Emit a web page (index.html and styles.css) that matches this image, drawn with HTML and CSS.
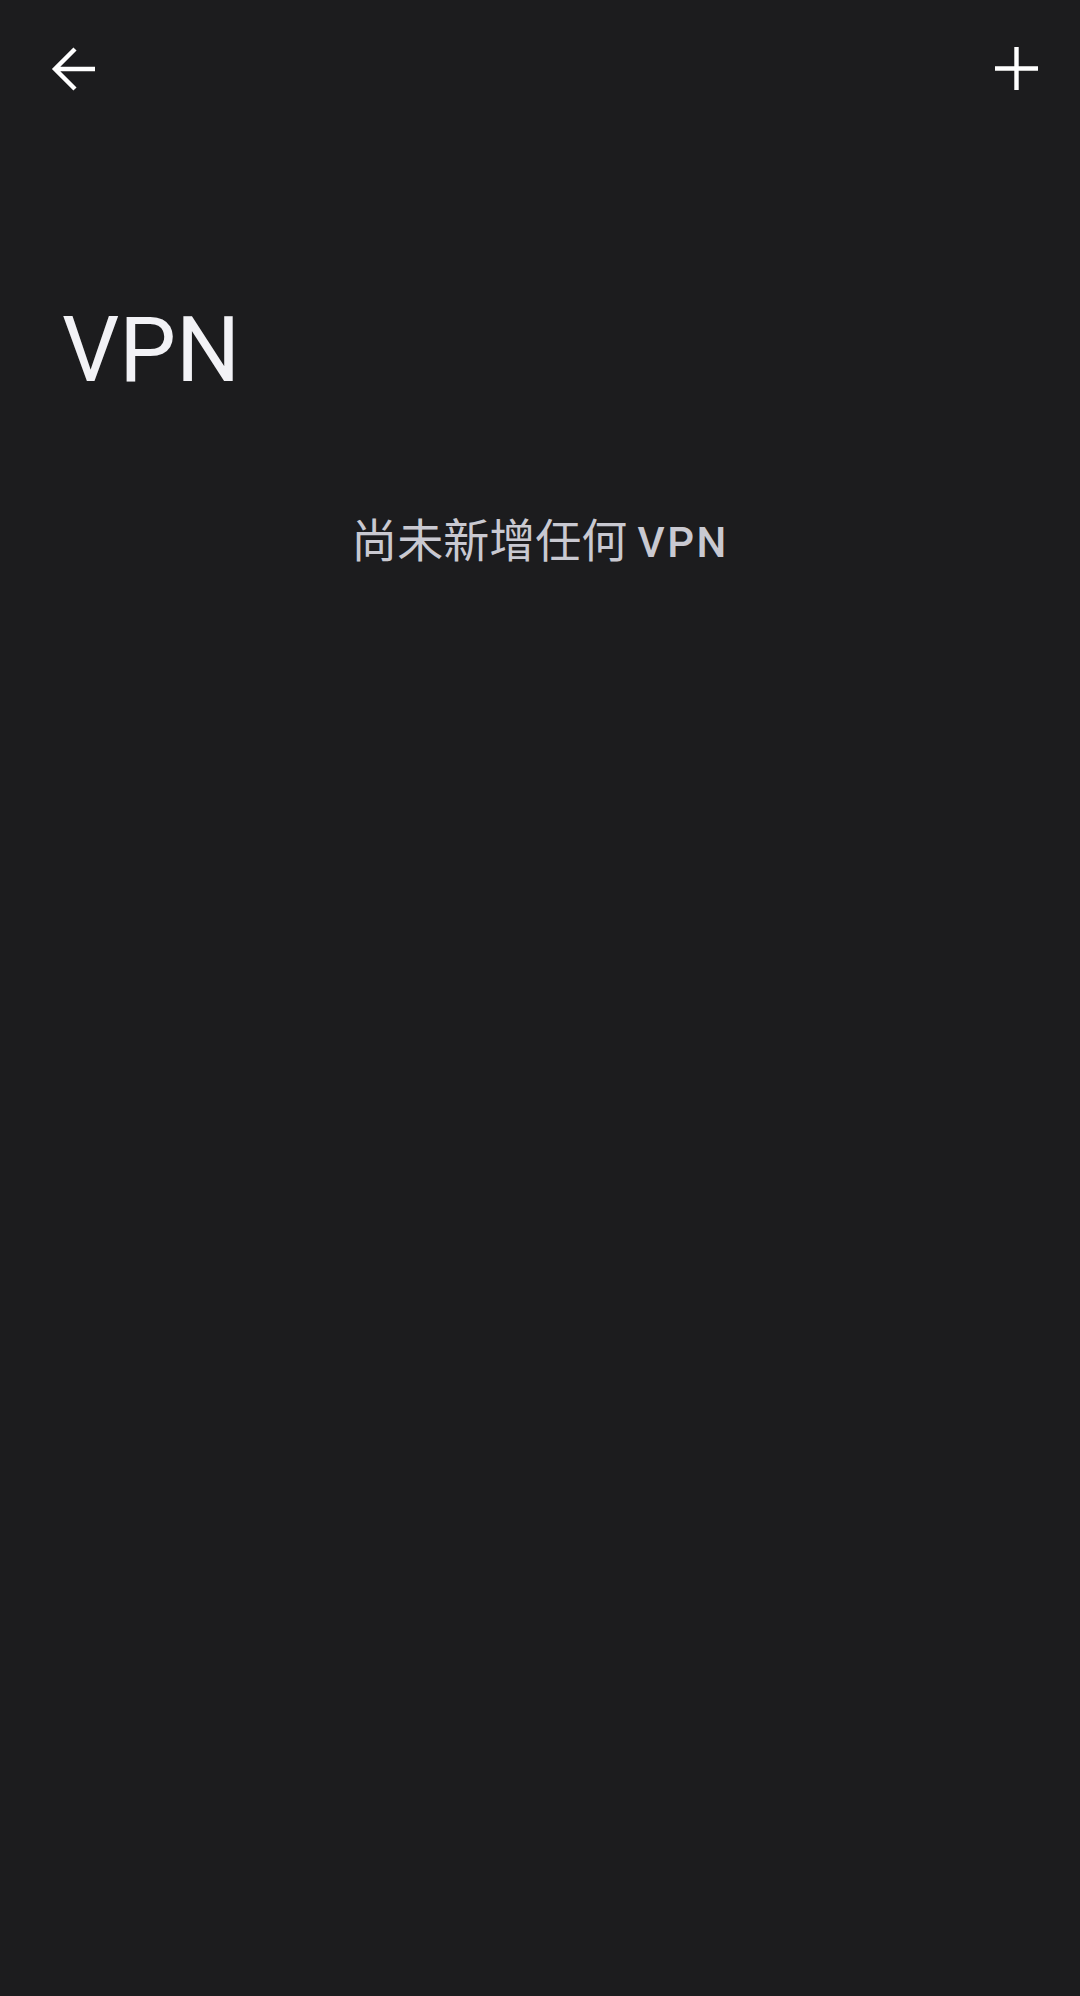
FILE: index.html
```html
<!DOCTYPE html>
<html lang="zh-Hant">
<head>
<meta charset="utf-8">
<link rel="stylesheet" href="styles.css">
</head>
<body>
<div class="screen">
  <header class="topbar">
    <button class="icon-btn" aria-label="返回">
      <svg width="63" height="63" viewBox="0 0 63 63">
        <path d="M53 32H14 M33 12L13 32L33 52" fill="none" stroke="#ffffff" stroke-width="4.4" stroke-linecap="butt" stroke-linejoin="miter"/>
      </svg>
    </button>
    <button class="icon-btn" aria-label="新增">
      <svg width="63" height="63" viewBox="0 0 63 63">
        <path d="M10 31.5H53 M31.5 10V53" fill="none" stroke="#ffffff" stroke-width="4.4"/>
      </svg>
    </button>
  </header>
  <h1 class="title">VPN</h1>
  <p class="empty"><span class="cjk">尚未新增任何</span> <span class="latin">VPN</span></p>
</div>
</body>
</html>
```
FILE: styles.css
```css
html, body {
  margin: 0;
  padding: 0;
  background: #1c1c1e;
}
.screen {
  width: 1080px;
  height: 1996px;
  background: #1c1c1e;
  font-family: Roboto, "Noto Sans CJK TC", sans-serif;
  color: #f2f2f6;
}
.topbar {
  display: flex;
  justify-content: space-between;
  align-items: center;
  padding: 37px 32px 0 42px;
}
.icon-btn {
  width: 63px;
  height: 63px;
  padding: 0;
  border: 0;
  background: transparent;
  display: flex;
}
.title {
  margin: 0;
  padding: 199px 0 0 62px;
  font-size: 90px;
  font-weight: 400;
  line-height: 104px;
  color: #f2f2f6;
}
.empty {
  margin: 104px 0 0;
  text-align: center;
  font-size: 42px;
  color: #c9c9d1;
  line-height: 60px;
}
.cjk {
  font-family: "Noto Sans CJK TC", sans-serif;
  font-size: 46px;
}
.latin {
  font-weight: 500;
  letter-spacing: 2.5px;
}
```
